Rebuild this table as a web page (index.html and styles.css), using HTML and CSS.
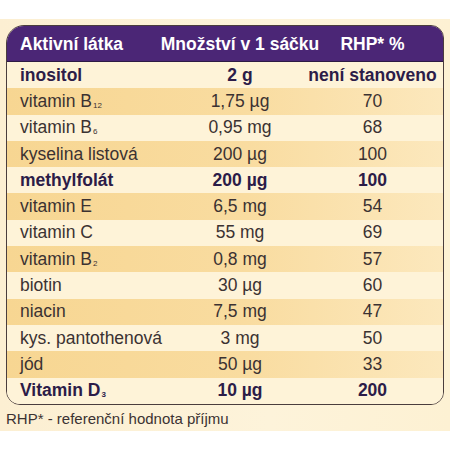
FILE: index.html
```html
<!DOCTYPE html>
<html lang="cs">
<head>
  <meta charset="UTF-8">
  <title>Složení</title>
  <link rel="stylesheet" href="styles.css">
</head>
<body>
  <div class="panel">
    <div class="card">
      <div class="row head">
        <div class="cell name">Aktivní látka</div>
        <div class="cell mid">Množství v 1 sáčku</div>
        <div class="cell mid">RHP* %</div>
      </div>
      <div class="row light bold">
        <div class="cell name">inositol</div>
        <div class="cell mid">2 g</div>
        <div class="cell mid">není stanoveno</div>
      </div>
      <div class="row dark">
        <div class="cell name">vitamin B<sub>12</sub></div>
        <div class="cell mid">1,75 µg</div>
        <div class="cell mid">70</div>
      </div>
      <div class="row light">
        <div class="cell name">vitamin B<sub>6</sub></div>
        <div class="cell mid">0,95 mg</div>
        <div class="cell mid">68</div>
      </div>
      <div class="row dark">
        <div class="cell name">kyselina listová</div>
        <div class="cell mid">200 µg</div>
        <div class="cell mid">100</div>
      </div>
      <div class="row light bold">
        <div class="cell name">methylfolát</div>
        <div class="cell mid">200 µg</div>
        <div class="cell mid">100</div>
      </div>
      <div class="row dark">
        <div class="cell name">vitamin E</div>
        <div class="cell mid">6,5 mg</div>
        <div class="cell mid">54</div>
      </div>
      <div class="row light">
        <div class="cell name">vitamin C</div>
        <div class="cell mid">55 mg</div>
        <div class="cell mid">69</div>
      </div>
      <div class="row dark">
        <div class="cell name">vitamin B<sub>2</sub></div>
        <div class="cell mid">0,8 mg</div>
        <div class="cell mid">57</div>
      </div>
      <div class="row light">
        <div class="cell name">biotin</div>
        <div class="cell mid">30 µg</div>
        <div class="cell mid">60</div>
      </div>
      <div class="row dark">
        <div class="cell name">niacin</div>
        <div class="cell mid">7,5 mg</div>
        <div class="cell mid">47</div>
      </div>
      <div class="row light">
        <div class="cell name">kys. pantothenová</div>
        <div class="cell mid">3 mg</div>
        <div class="cell mid">50</div>
      </div>
      <div class="row dark">
        <div class="cell name">jód</div>
        <div class="cell mid">50 µg</div>
        <div class="cell mid">33</div>
      </div>
      <div class="row light bold">
        <div class="cell name">Vitamin D<sub>3</sub></div>
        <div class="cell mid">10 µg</div>
        <div class="cell mid">200</div>
      </div>
    </div>
    <p class="note">RHP* - referenční hodnota příjmu</p>
  </div>
</body>
</html>
```

FILE: styles.css
```css
body {
  margin: 0;
  background-color: #fff;
  font-family: 'Liberation Sans', Arial, sans-serif;
  color: #3b3232;
}
.panel {
  margin-top: 19px;
  height: 412px;
  padding: 6px 6px 0 6px;
  box-sizing: border-box;
  background: linear-gradient(to right, #fcefd2, #fdf3da 60%, #fdf1d3);
}
.card {
  border: 1.5px solid #4a3d3d;
  border-radius: 18px 13px 13px 14px;
  overflow: hidden;
  background-color: #fef4da;
}
.row {
  display: grid;
  grid-template-columns: 171px 124px 1fr;
  height: 26.3px;
  align-items: center;
  font-size: 17.5px;
}
.cell {
  white-space: nowrap;
}
.name {
  padding-left: 13px;
}
.mid {
  display: flex;
  justify-content: center;
}
.head {
  height: 36px;
  padding-top: 1px;
  box-sizing: border-box;
  background-color: #4b2676;
  color: #fff;
  font-weight: bold;
  border-bottom: 1.5px solid #2e1a44;
}
.light {
  background-color: #fef3d8;
}
.dark {
  background: linear-gradient(to right, #f7d692, #f9dca0 55%, #fce8bd);
}
.bold {
  font-weight: bold;
  color: #2c1c48;
}
sub {
  font-size: 8px;
  vertical-align: baseline;
  position: relative;
  top: 1px;
  margin-left: 1px;
}
.note {
  margin: 5px 0 0 0;
  font-size: 15px;
  color: #3b3232;
}
```
